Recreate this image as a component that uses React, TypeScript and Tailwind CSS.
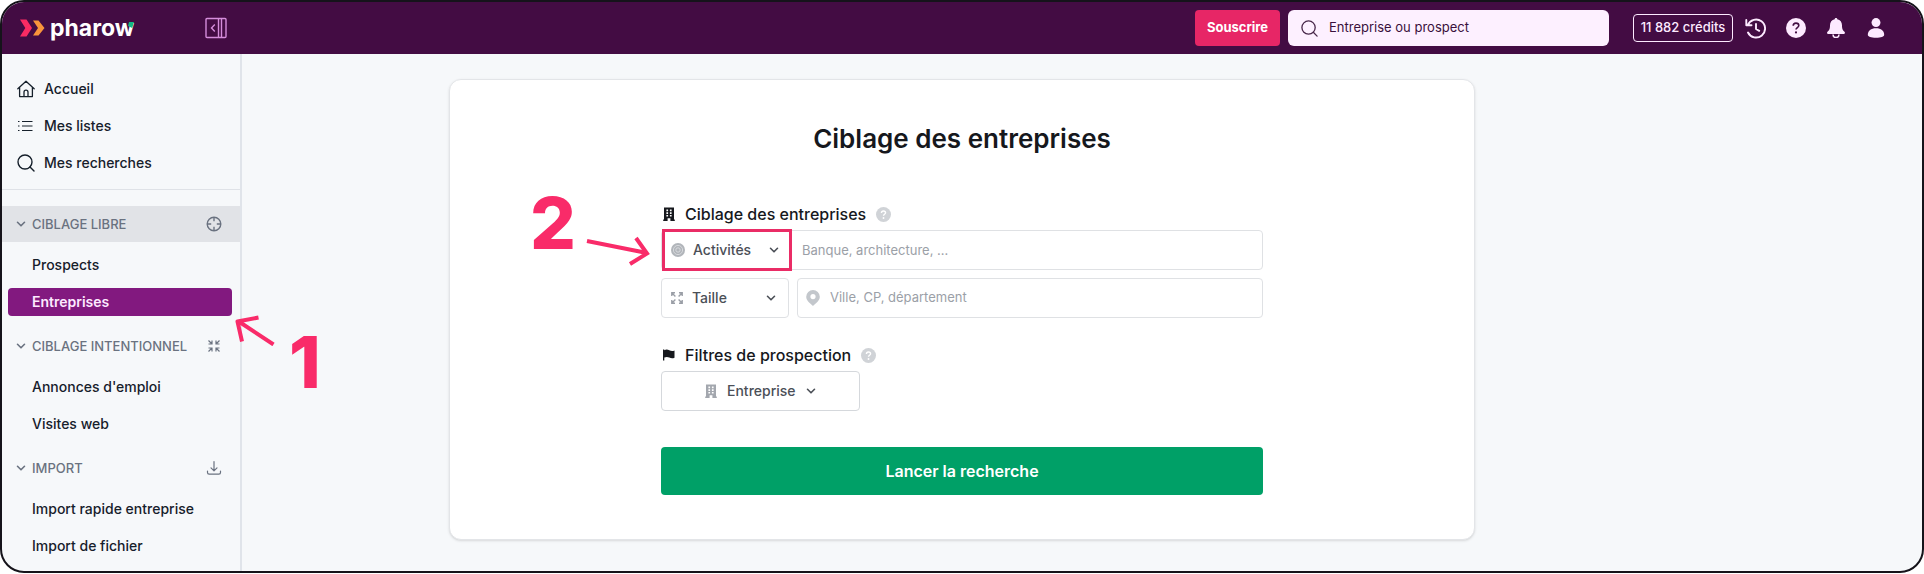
import type { ReactNode } from "react";

const sections = [
  { title: "CIBLAGE LIBRE", icon: <Crosshair />, active: true, items: ["Prospects", "Entreprises"] },
  { title: "CIBLAGE INTENTIONNEL", icon: <ArrowsIn />, active: false, items: ["Annonces d'emploi", "Visites web"] },
  { title: "IMPORT", icon: <Download />, active: false, items: ["Import rapide entreprise", "Import de fichier"] },
];

const mainLinks = [
  { label: "Accueil", icon: <HomeIcon /> },
  { label: "Mes listes", icon: <ListIcon /> },
  { label: "Mes recherches", icon: <SearchIcon className="size-5" /> },
];

/* ─── Icons ──────────────────────────────────────────────── */

function HomeIcon() {
  return (
    <svg className="size-5" viewBox="0 0 20 20" fill="none" stroke="currentColor" strokeWidth="1.3" strokeLinejoin="round" strokeLinecap="round">
      <path d="M1.8 9.8 10 2.2l8.2 7.6M3.6 8.4v9.2h12.8V8.4M8 17.4v-4.2a2 2 0 0 1 4 0v4.2" />
    </svg>
  );
}

function ListIcon() {
  return (
    <svg className="size-5" viewBox="0 0 20 20" fill="none" stroke="currentColor" strokeWidth="1.2">
      <path d="M6 5.5h10.500M6 10h10.500M6 14.500h10.500" />
      <path d="M2 5.500h1.500M2 10h1.500M2 14.500h1.500" />
    </svg>
  );
}

function SearchIcon({ className }: { className: string }) {
  return (
    <svg className={className} viewBox="0 0 20 20" fill="none" stroke="currentColor" strokeWidth="1.4" strokeLinecap="round">
      <circle cx="9" cy="9" r="7" />
      <path d="m14 14 4 4" />
    </svg>
  );
}

function Crosshair() {
  return (
    <svg className="size-4" viewBox="0 0 16 16" fill="none" stroke="currentColor" strokeWidth="1.4">
      <circle cx="8" cy="8" r="6.8" />
      <path d="M8 1v4.2M8 10.8V15M1 8h4.2M10.8 8H15" />
    </svg>
  );
}

function ArrowsIn() {
  return (
    <svg className="size-4" viewBox="0 0 16 16" fill="none" stroke="currentColor" strokeWidth="1.2">
      <path d="M2.500 2.500 6 6M6 2.500V6H2.500M13.500 2.500 10 6M10 2.500V6h3.500M2.500 13.500 6 10M6 13.500V10H2.500M13.500 13.500 10 10M10 13.500V10h3.500" />
    </svg>
  );
}

function ArrowsOut() {
  return (
    <svg className="size-3.5 text-[#9a9ea6]" viewBox="0 0 14 14" fill="none" stroke="currentColor" strokeWidth="1.4">
      <path d="M1.8 1.8 5.400 5.400M1.8 5V1.8H5M12.200 1.8 8.600 5.400M9 1.8h3.200V5M1.8 12.200l3.600-3.600M1.8 9v3.200H5M12.200 12.200 8.600 8.600M12.200 9v3.200H9" />
    </svg>
  );
}

function Download() {
  return (
    <svg className="size-4" viewBox="0 0 16 16" fill="none" stroke="currentColor" strokeWidth="1.2" strokeLinecap="round" strokeLinejoin="round">
      <path d="M8 1.500v9M5 7.800l3 3 3-3M1.500 11v1.600c0 1 .6 1.600 1.600 1.600h9.800c1 0 1.600-.6 1.600-1.600V11" />
    </svg>
  );
}

function Chevron() {
  return (
    <svg className="pointer-events-none size-2.5 shrink-0" viewBox="0 0 10 10" fill="none" stroke="currentColor" strokeWidth="1.6" strokeLinecap="round" strokeLinejoin="round">
      <path d="m1.500 3.300 3.500 3.500 3.500-3.500" />
    </svg>
  );
}

function Building({ className }: { className: string }) {
  return (
    <svg className={className} viewBox="0 0 12 14" fill="currentColor" fillRule="evenodd">
      <path d="M1 .5h10v12h.8V14H7.400v-2.800H4.600V14H.2v-1.500H1zM3.400 2.600v1.600h1.700V2.600zm3.500 0v1.600h1.700V2.600zM3.400 5.300v1.600h1.700V5.300zm3.500 0v1.600h1.700V5.300zM3.400 8v1.500h1.700V8zm3.500 0v1.500h1.700V8z" />
    </svg>
  );
}

function Flag() {
  return (
    <svg className="h-3.5 w-3" viewBox="0 0 12 14" fill="currentColor">
      <path d="M0 1.500h1.300v.8c1.800-1 3.300-.8 5 0s3.200 1 5.200.2v7.300c-2 .8-3.500.6-5.200-.2s-3.200-.8-5 0V12.500H0z" />
    </svg>
  );
}

function Help() {
  return (
    <svg className="size-[15px] text-[#d0d3d7]" viewBox="0 0 16 16">
      <circle cx="8" cy="8" r="8" fill="currentColor" />
      <path d="M5.800 6.300c0-1.300 1-2.100 2.200-2.100s2.200.8 2.200 2c0 1.600-2.200 1.500-2.200 3.100" fill="none" stroke="#fff" strokeWidth="1.5" />
      <circle cx="8" cy="11.700" r="1" fill="#fff" />
    </svg>
  );
}

function Target() {
  return (
    <svg className="size-3.5" viewBox="0 0 14 14">
      <circle cx="7" cy="7" r="7" fill="#b1b5ba" />
      <circle cx="7" cy="7" r="4.6" fill="none" stroke="#dfe1e4" strokeWidth=".8" />
      <circle cx="7" cy="7" r="2.2" fill="none" stroke="#dfe1e4" strokeWidth=".8" />
    </svg>
  );
}

function Pin() {
  return (
    <svg className="h-4 w-3.5" viewBox="0 0 14 16" fill="#c3c7cc" fillRule="evenodd">
      <path d="M7 0a6.800 6.800 0 0 1 6.800 6.700C13.800 10.500 9.600 13.500 7 16 4.400 13.500.2 10.500.2 6.700A6.800 6.800 0 0 1 7 0zm0 4a2.600 2.600 0 1 0 0 5.200A2.600 2.600 0 0 0 7 4z" />
    </svg>
  );
}

/* ─── Form pieces ────────────────────────────────────────── */

function Dropdown({ label, icon, className, grow }: { label: string; icon: ReactNode; className: string; grow?: boolean }) {
  return (
    <label className={className}>
      {icon}
      <select
        aria-label={label}
        className={
          grow
            ? "min-w-0 flex-1 appearance-none bg-transparent text-sm font-medium outline-none"
            : "appearance-none bg-transparent text-sm font-medium outline-none"
        }
      >
        <option>{label}</option>
      </select>
      <Chevron />
    </label>
  );
}

function GroupTitle({ icon, children }: { icon: ReactNode; children: ReactNode }) {
  return (
    <h2 className="flex h-8 items-center text-base font-medium text-[#16181d]">
      <span className="flex w-6 items-center pl-0.5">{icon}</span>
      {children}
      <button type="button" aria-label="Aide" className="ml-2.5">
        <Help />
      </button>
    </h2>
  );
}

function Header() {
  return (
    <header className="flex h-[52px] items-center bg-[#430c43] pr-9 pl-[18px] text-[#fdeaff]">
      <a href="#" className="flex items-center gap-1 text-white">
        <svg className="h-[18px] w-[26px]" viewBox="0 0 26 18">
          <path d="M0 .5h6.500L12 9l-5.500 8.500H0L5.300 9z" fill="#f92b63" />
          <path d="M13 1.500h5.500L24.500 9l-6 7.500H13L18 9z" fill="#f9943b" />
        </svg>
        <span className="relative text-[23px] leading-7 font-bold">
          pharow
          <svg className="absolute top-2 right-0 h-1.5 w-[7px]" viewBox="0 0 7 6" fill="#12b886">
            <path d="M2 0h5L5.200 6 1 4z" />
          </svg>
        </span>
      </a>
      <button type="button" aria-label="Replier le menu" className="ml-[71px] text-[#d58ddb]">
        <svg className="size-[22px]" viewBox="0 0 22 22" fill="none" stroke="currentColor" strokeWidth="1.4">
          <rect x="1" y="1.5" width="20" height="19" rx="1" />
          <path d="M13.500 1.500v19M16.500 1.500v19M9.800 7.500 6.500 11l3.300 3.500" />
        </svg>
      </button>

      <button type="button" className="ml-auto h-9 w-[85px] rounded bg-[#e72666] text-[13px] font-bold text-white">
        Souscrire
      </button>
      <label className="ml-2 flex h-9 w-[321px] items-center gap-2.5 rounded-md bg-[#fdf0ff] px-3 text-[#4a2a4c]">
        <SearchIcon className="size-[19px]" />
        <input
          type="search"
          aria-label="Rechercher"
          placeholder="Entreprise ou prospect"
          className="min-w-0 flex-1 bg-transparent text-[13px] outline-none placeholder:text-[#3a103c]"
        />
      </label>
      <button type="button" className="ml-6 h-7 w-[100px] rounded border border-[#fdeaff] text-[13px] font-medium whitespace-nowrap">
        11 882 crédits
      </button>
      <nav aria-label="Compte" className="ml-3 flex items-center gap-5">
        <button type="button" aria-label="Historique">
          <svg className="size-[21px]" viewBox="0 0 21 21" fill="none" stroke="currentColor" strokeWidth="1.9" strokeLinecap="round" strokeLinejoin="round">
            <path d="M2.800 7A9 9 0 1 1 3 14.500M1.300 2v5.200h5.200M11 6v5l3.200 1.800" />
          </svg>
        </button>
        <button type="button" aria-label="Aide">
          <svg className="size-5" viewBox="0 0 20 20">
            <circle cx="10" cy="10" r="10" fill="currentColor" />
            <path d="M7.200 7.800c0-1.600 1.200-2.700 2.800-2.700s2.800 1 2.800 2.500c0 2-2.800 2-2.800 4" fill="none" stroke="#430c43" strokeWidth="1.6" />
            <circle cx="10" cy="14.400" r="1.100" fill="#430c43" />
          </svg>
        </button>
        <button type="button" aria-label="Notifications">
          <svg className="size-5" viewBox="0 0 20 20" fill="currentColor">
            <path d="M10 0c.8 0 1.300.5 1.300 1.200 3 .6 4.700 3 4.700 6 0 4 1 5.300 2.500 6.600.9.900.5 2.200-.8 2.200H2.300c-1.300 0-1.700-1.300-.8-2.200C3 12.500 4 11.200 4 7.200c0-3 1.700-5.400 4.700-6C8.700.5 9.200 0 10 0z" />
            <path d="M7 16.500a3 3 0 0 0 6 0" fill="none" stroke="currentColor" strokeWidth="1.5" />
          </svg>
        </button>
        <button type="button" aria-label="Profil">
          <svg className="size-5" viewBox="0 0 20 22" fill="currentColor">
            <circle cx="10" cy="5" r="4.900" />
            <path d="M1 18.500c0-4.500 3.500-7.300 9-7.300s9 2.800 9 7.300c0 2.200-3.500 3.300-9 3.300s-9-1.100-9-3.300z" />
          </svg>
        </button>
      </nav>
    </header>
  );
}

function Sidebar() {
  return (
    <aside className="relative border-r-2 border-[#e0e4ea] text-sm font-medium text-[#16202b]">
      <ul className="flex flex-col border-b border-[#dfe2e7] pt-4 pb-2">
        {mainLinks.map((l) => (
          <li key={l.label}>
            <a href="#" className="flex h-[37px] items-center gap-2 pl-3.5">
              {l.icon}
              {l.label}
            </a>
          </li>
        ))}
      </ul>
      <div className="flex flex-col gap-2 pt-4">
        {sections.map((s) => (
          <section key={s.title}>
            <h2 className={s.active ? "mb-1 bg-[#e1e3e7] text-[#6a7280]" : "mb-1 text-[#6a7280]"}>
              <button type="button" className="flex h-9 w-full items-center gap-1.5 pr-[18px] pl-3.5 text-[13px]">
                <Chevron />
                {s.title}
                <span className="ml-auto">{s.icon}</span>
              </button>
            </h2>
            <ul>
              {s.items.map((item) => (
                <li key={item} className="flex h-[37px] items-center pr-2 pl-1.5">
                  <a
                    href="#"
                    className={
                      item === "Entreprises"
                        ? "flex h-7 w-full items-center rounded bg-[#82197f] pl-6 font-semibold text-[#fdeaff]"
                        : "flex h-7 w-full items-center pl-6"
                    }
                  >
                    {item}
                  </a>
                </li>
              ))}
            </ul>
          </section>
        ))}
      </div>

      {/* Step 1 */}
      <div aria-hidden="true" className="absolute top-[256px] left-[231px] flex text-[#f92b69]">
        <svg className="h-9 w-11 shrink-0" viewBox="0 0 44 36" fill="none" stroke="currentColor" strokeWidth="4">
          <path d="M40.500 34.500 5 11M25.500 7.500 4.500 11.500 9 31.500" strokeLinejoin="round" />
        </svg>
        <span className="mt-4 ml-3 text-[72px] leading-[72px] font-extrabold">1</span>
      </div>
    </aside>
  );
}

export default function App() {
  return (
    <div className="flex min-h-screen flex-col bg-white pb-px font-['Inter',sans-serif]">
      <div className="flex flex-1 flex-col overflow-hidden rounded-[24px] border-2 border-[#15131a] bg-[#f6f8fa]">
        <Header />
        <div className="grid flex-1 grid-cols-[240px_1fr_240px]">
          <Sidebar />
          <main className="px-4 pt-[25px] pb-7">
            <div className="relative mx-auto max-w-[1026px] rounded-xl border border-[#e3e5e8] bg-white pt-[37px] pb-11 shadow-sm">
              <h1 className="text-center text-[26px] leading-[44px] font-semibold text-[#16181d]">Ciblage des entreprises</h1>

              <form className="mx-auto mt-[37px] w-full max-w-[602px] text-[#4b4f57]">
                <GroupTitle icon={<Building className="h-3.5 w-3" />}>Ciblage des entreprises</GroupTitle>
                <div className="grid grid-cols-[128px_1fr] gap-2">
                  <div className="col-span-2 flex h-10 items-center rounded border border-[#dfe1e4]">
                    <Dropdown
                      grow
                      label="Activités"
                      icon={<Target />}
                      className="-my-1 flex h-[42px] w-[130px] shrink-0 items-center gap-2 border-[3px] border-[#ea2c66] pr-2.5 pl-1.5"
                    />
                    <input
                      type="text"
                      aria-label="Activités recherchées"
                      placeholder="Banque, architecture, ..."
                      className="h-full min-w-0 flex-1 bg-transparent px-2.5 text-[13px] outline-none placeholder:text-[#9ba0a7]"
                    />
                  </div>
                  <Dropdown
                    grow
                    label="Taille"
                    icon={<ArrowsOut />}
                    className="flex h-10 items-center gap-2 rounded border border-[#dfe1e4] pr-3 pl-2"
                  />
                  <label className="flex h-10 items-center gap-2.5 rounded border border-[#dfe1e4] px-2">
                    <Pin />
                    <input
                      type="text"
                      aria-label="Localisation"
                      placeholder="Ville, CP, département"
                      className="min-w-0 flex-1 bg-transparent text-[13px] outline-none placeholder:text-[#9ba0a7]"
                    />
                  </label>
                </div>

                <div className="mt-[21px]">
                  <GroupTitle icon={<Flag />}>Filtres de prospection</GroupTitle>
                  <Dropdown
                    label="Entreprise"
                    icon={<Building className="h-3.5 w-3 text-[#a3a7ae]" />}
                    className="flex h-10 w-[199px] items-center justify-center gap-2.5 rounded border border-[#d5d8dc]"
                  />
                </div>

                <button type="submit" className="mt-9 h-12 w-full rounded bg-[#00a067] text-base font-semibold text-white">
                  Lancer la recherche
                </button>
              </form>

              {/* Step 2 */}
              <div aria-hidden="true" className="absolute top-[107px] left-[80px] flex text-[#f92b69]">
                <span className="text-[72px] leading-[72px] font-extrabold">2</span>
                <svg className="mt-12 ml-2 h-8 w-[66px]" viewBox="0 0 66 32" fill="none" stroke="currentColor" strokeWidth="4">
                  <path d="M3 6 63 18M52 3 63 18.500 46 29" />
                </svg>
              </div>
            </div>
          </main>
        </div>
      </div>
    </div>
  );
}
